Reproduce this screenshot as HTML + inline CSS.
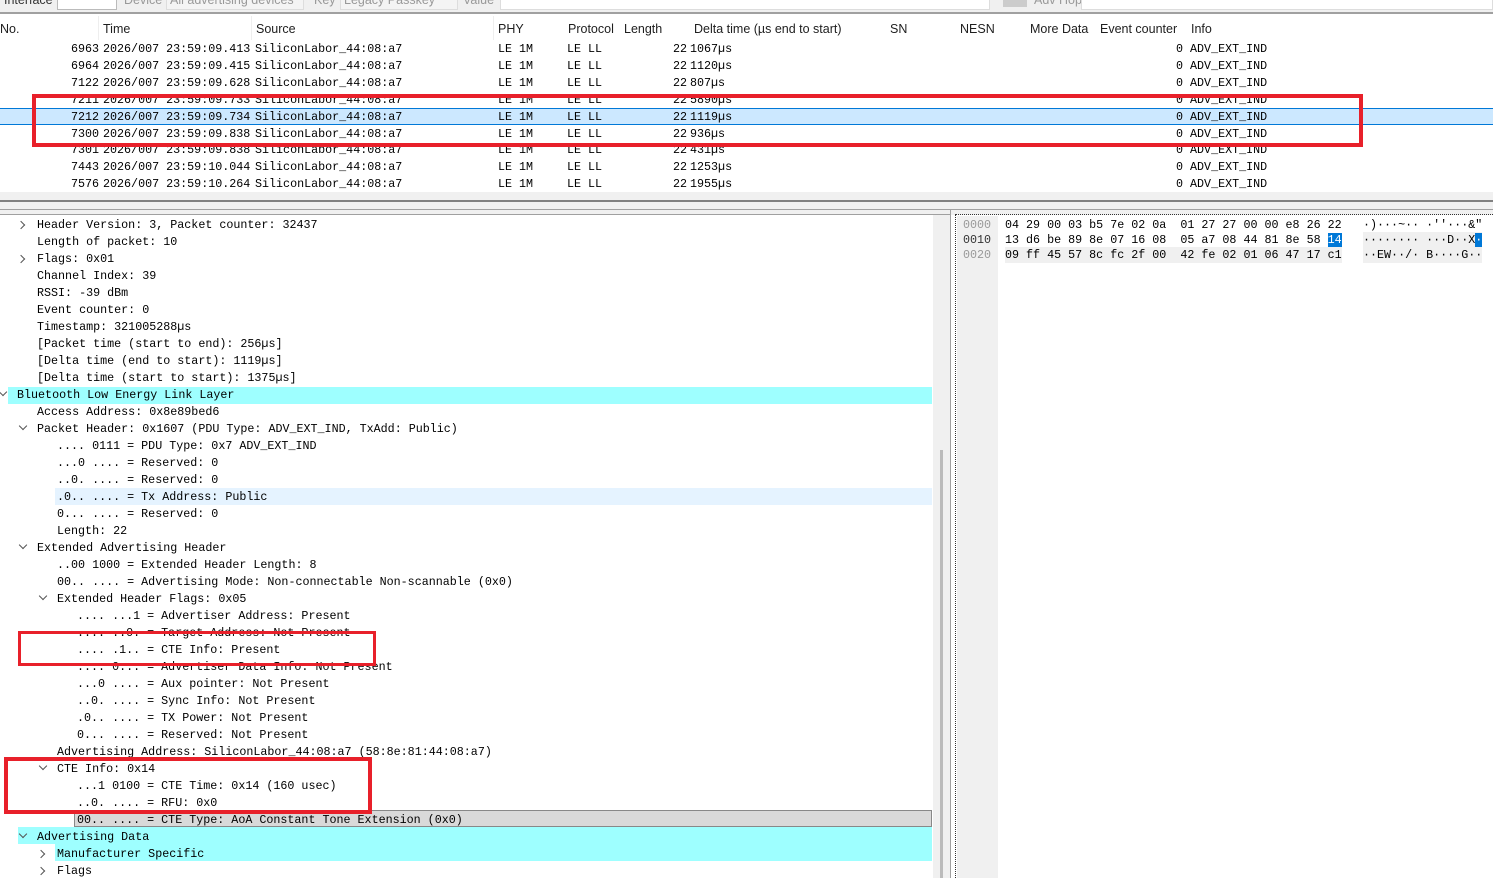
<!DOCTYPE html>
<html><head><meta charset="utf-8"><style>
*{margin:0;padding:0;box-sizing:border-box}
body{width:1493px;height:878px;overflow:hidden;background:#fff;position:relative;font-family:"Liberation Mono",monospace;font-size:11.7px;color:#000}
.a{position:absolute;white-space:pre;line-height:16px;margin-top:1px}
.s{font-family:"Liberation Sans",sans-serif;font-size:12.5px;color:#1e1e1e}
.r{text-align:right}
.box{position:absolute;border:4px solid #e8202a}
.bg{position:absolute}
.arr{position:absolute;width:6px;height:6px;border-right:1.3px solid #555;border-bottom:1.3px solid #555}
</style></head><body>
<!-- toolbar -->
<div class="bg" style="left:0;top:0;width:1493px;height:14px;background:#f0f0f0;border-bottom:2px solid #a0a0a0"></div>
<div class="a s" style="left:4px;top:-9px;color:#333">Interface</div>
<div class="bg" style="left:57px;top:-2px;width:60px;height:12px;background:#fff;border:1px solid #bbb"></div>
<div class="a s" style="left:124px;top:-9px;color:#999">Device</div>
<div class="bg" style="left:166px;top:-2px;width:138px;height:12px;background:#f4f4f4;border:1px solid #ddd"></div>
<div class="a s" style="left:170px;top:-9px;color:#999">All advertising devices</div>
<div class="a s" style="left:314px;top:-9px;color:#999">Key</div>
<div class="bg" style="left:340px;top:-2px;width:118px;height:12px;background:#f4f4f4;border:1px solid #ddd"></div>
<div class="a s" style="left:344px;top:-9px;color:#999">Legacy Passkey</div>
<div class="a s" style="left:463px;top:-9px;color:#999">Value</div>
<div class="bg" style="left:500px;top:-2px;width:490px;height:12px;background:#fff;border:1px solid #ddd"></div>
<div class="bg" style="left:1003px;top:-2px;width:24px;height:9px;background:#ccc"></div>
<div class="a s" style="left:1034px;top:-9px;color:#999">Adv Hop</div>
<div class="bg" style="left:1081px;top:-2px;width:412px;height:12px;background:#fff;border:1px solid #ddd"></div>

<!-- column headers -->
<div class="a s" style="left:0;top:20px">No.</div>
<div class="a s" style="left:103px;top:20px">Time</div>
<div class="a s" style="left:256px;top:20px">Source</div>
<div class="a s" style="left:498px;top:20px">PHY</div>
<div class="a s" style="left:568px;top:20px">Protocol</div>
<div class="a s" style="left:624px;top:20px">Length</div>
<div class="a s" style="left:694px;top:20px">Delta time (µs end to start)</div>
<div class="a s" style="left:890px;top:20px">SN</div>
<div class="a s" style="left:960px;top:20px">NESN</div>
<div class="a s" style="left:1030px;top:20px">More Data</div>
<div class="a s" style="left:1100px;top:20px">Event counter</div>
<div class="a s" style="left:1191px;top:20px">Info</div>
<div class="bg" style="left:98px;top:16px;width:1px;height:24px;background:#eee"></div>
<div class="bg" style="left:251px;top:16px;width:1px;height:24px;background:#eee"></div>
<div class="bg" style="left:493px;top:16px;width:1px;height:24px;background:#eee"></div>

<!-- selected row -->
<div class="bg" style="left:0;top:108px;width:1493px;height:17px;background:#cce8ff;border-top:1px solid #0078d7;border-bottom:1px solid #0078d7"></div>

<div id="rows"></div>
<script>
var rows=[["6963","09.413","1067"],["6964","09.415","1120"],["7122","09.628","807"],["7211","09.733","5890"],["7212","09.734","1119"],["7300","09.838","936"],["7301","09.838","431"],["7443","10.044","1253"],["7576","10.264","1955"]];
var ys=[48,65,82,99,116,133,149,166,183],h="";
rows.forEach(function(r,i){var t=ys[i]-8;
h+='<div class="a r" style="left:50px;width:49px;top:'+t+'px">'+r[0]+'</div>';
h+='<div class="a" style="left:103px;top:'+t+'px">2026/007 23:59:'+r[1]+'</div><div class="a" style="left:255px;top:'+t+'px">SiliconLabor_44:08:a7</div>';
h+='<div class="a" style="left:498px;top:'+t+'px">LE 1M</div><div class="a" style="left:567px;top:'+t+'px">LE LL</div>';
h+='<div class="a r" style="left:650px;width:37px;top:'+t+'px">22</div><div class="a" style="left:690px;top:'+t+'px">'+r[2]+'µs</div>';
h+='<div class="a" style="left:1176px;top:'+t+'px">0 ADV_EXT_IND</div>';});
document.getElementById('rows').innerHTML=h;
</script>
<div class="box" style="left:32px;top:94px;width:1331px;height:53px"></div>

<!-- splitter -->
<div class="bg" style="left:0;top:192px;width:1493px;height:23px;background:#f0f0f0"></div>
<div class="bg" style="left:0;top:200px;width:1493px;height:2px;background:#808080"></div>
<div class="bg" style="left:0;top:209px;width:1493px;height:1px;background:#a0a0a0"></div>
<div class="bg" style="left:0;top:214px;width:950px;height:1px;background:#a0a0a0"></div>

<!-- details right gutter -->
<div class="bg" style="left:933px;top:215px;width:17px;height:663px;background:#f0f0f0"></div>
<div class="bg" style="left:940px;top:450px;width:3px;height:428px;background:#bbb"></div>
<div class="bg" style="left:950px;top:210px;width:1px;height:668px;background:#a0a0a0"></div>
<div class="bg" style="left:955px;top:214px;width:538px;height:664px;border-left:1px dotted #333;border-top:1px dotted #333"></div>
<div class="bg" style="left:957px;top:216px;width:41px;height:662px;background:#f0f0f0"></div>

<!-- detail highlights -->
<div class="bg" style="left:8px;top:387px;width:924px;height:17px;background:#9effff"></div>
<div class="bg" style="left:55px;top:488px;width:877px;height:17px;background:#e5f3ff"></div>
<div class="bg" style="left:74px;top:810px;width:858px;height:17px;background:#d9d9d9;border:1px solid #888"></div>
<div class="bg" style="left:18px;top:827px;width:914px;height:17px;background:#9effff"></div>
<div class="bg" style="left:55px;top:844px;width:877px;height:17px;background:#9effff"></div>

<div id="det"></div>
<script>
var d=[[37,"Header Version: 3, Packet counter: 32437",">"],[37,"Length of packet: 10"],[37,"Flags: 0x01",">"],[37,"Channel Index: 39"],[37,"RSSI: -39 dBm"],[37,"Event counter: 0"],[37,"Timestamp: 321005288µs"],[37,"[Packet time (start to end): 256µs]"],[37,"[Delta time (end to start): 1119µs]"],[37,"[Delta time (start to start): 1375µs]"],
[17,"Bluetooth Low Energy Link Layer","v"],[37,"Access Address: 0x8e89bed6"],[37,"Packet Header: 0x1607 (PDU Type: ADV_EXT_IND, TxAdd: Public)","v"],[57,".... 0111 = PDU Type: 0x7 ADV_EXT_IND"],[57,"...0 .... = Reserved: 0"],[57,"..0. .... = Reserved: 0"],[57,".0.. .... = Tx Address: Public"],[57,"0... .... = Reserved: 0"],[57,"Length: 22"],
[37,"Extended Advertising Header","v"],[57,"..00 1000 = Extended Header Length: 8"],[57,"00.. .... = Advertising Mode: Non-connectable Non-scannable (0x0)"],[57,"Extended Header Flags: 0x05","v"],[77,".... ...1 = Advertiser Address: Present"],[77,".... ..0. = Target Address: Not Present"],[77,".... .1.. = CTE Info: Present"],[77,".... 0... = Advertiser Data Info: Not Present"],[77,"...0 .... = Aux pointer: Not Present"],[77,"..0. .... = Sync Info: Not Present"],[77,".0.. .... = TX Power: Not Present"],[77,"0... .... = Reserved: Not Present"],[57,"Advertising Address: SiliconLabor_44:08:a7 (58:8e:81:44:08:a7)"],[57,"CTE Info: 0x14","v"],[77,"...1 0100 = CTE Time: 0x14 (160 usec)"],[77,"..0. .... = RFU: 0x0"],[77,"00.. .... = CTE Type: AoA Constant Tone Extension (0x0)"],
[37,"Advertising Data","v"],[57,"Manufacturer Specific",">"],[57,"Flags",">"]];
var g="";d.forEach(function(e,i){var c=224+i*17,t=c-8;
g+='<div class="a" style="left:'+e[0]+'px;top:'+t+'px">'+e[1]+'</div>';
if(e[2]==">")g+='<div class="arr" style="left:'+(e[0]-19)+'px;top:'+(c-2)+'px;transform:rotate(-45deg)"></div>';
if(e[2]=="v")g+='<div class="arr" style="left:'+(e[0]-17)+'px;top:'+(c-5)+'px;transform:rotate(45deg)"></div>';});
document.getElementById('det').innerHTML=g;
</script>
<div class="box" style="left:18px;top:631px;width:358px;height:35px;border-width:3px"></div>
<div class="box" style="left:4px;top:757px;width:368px;height:57px"></div>

<!-- hex -->
<div class="a" style="left:963px;top:216px;color:#999">0000</div>
<div class="a" style="left:963px;top:231px;color:#333">0010</div>
<div class="a" style="left:963px;top:246px;color:#999">0020</div>
<div class="a" style="left:1005px;top:216px">04 29 00 03 b5 7e 02 0a  01 27 27 00 00 e8 26 22</div>
<div class="a" style="left:1005px;top:231px">13 d6 be 89 8e 07 16 08  05 a7 08 44 81 8e 58 <span style="background:#0078d7;color:#fff">14</span></div>
<div class="a" style="left:1005px;top:246px;background:#f0f0f0">09 ff 45 57 8c fc 2f 00  42 fe 02 01 06 47 17 c1</div>
<div class="a" style="left:1363px;top:216px">·)···~·· ·''···&amp;"</div>
<div class="a" style="left:1363px;top:231px;background:#f0f0f0">········ ···D··X<span style="background:#0078d7;color:#fff">·</span></div>
<div class="a" style="left:1363px;top:246px;background:#f0f0f0">··EW··/· B····G··</div>
</body></html>
